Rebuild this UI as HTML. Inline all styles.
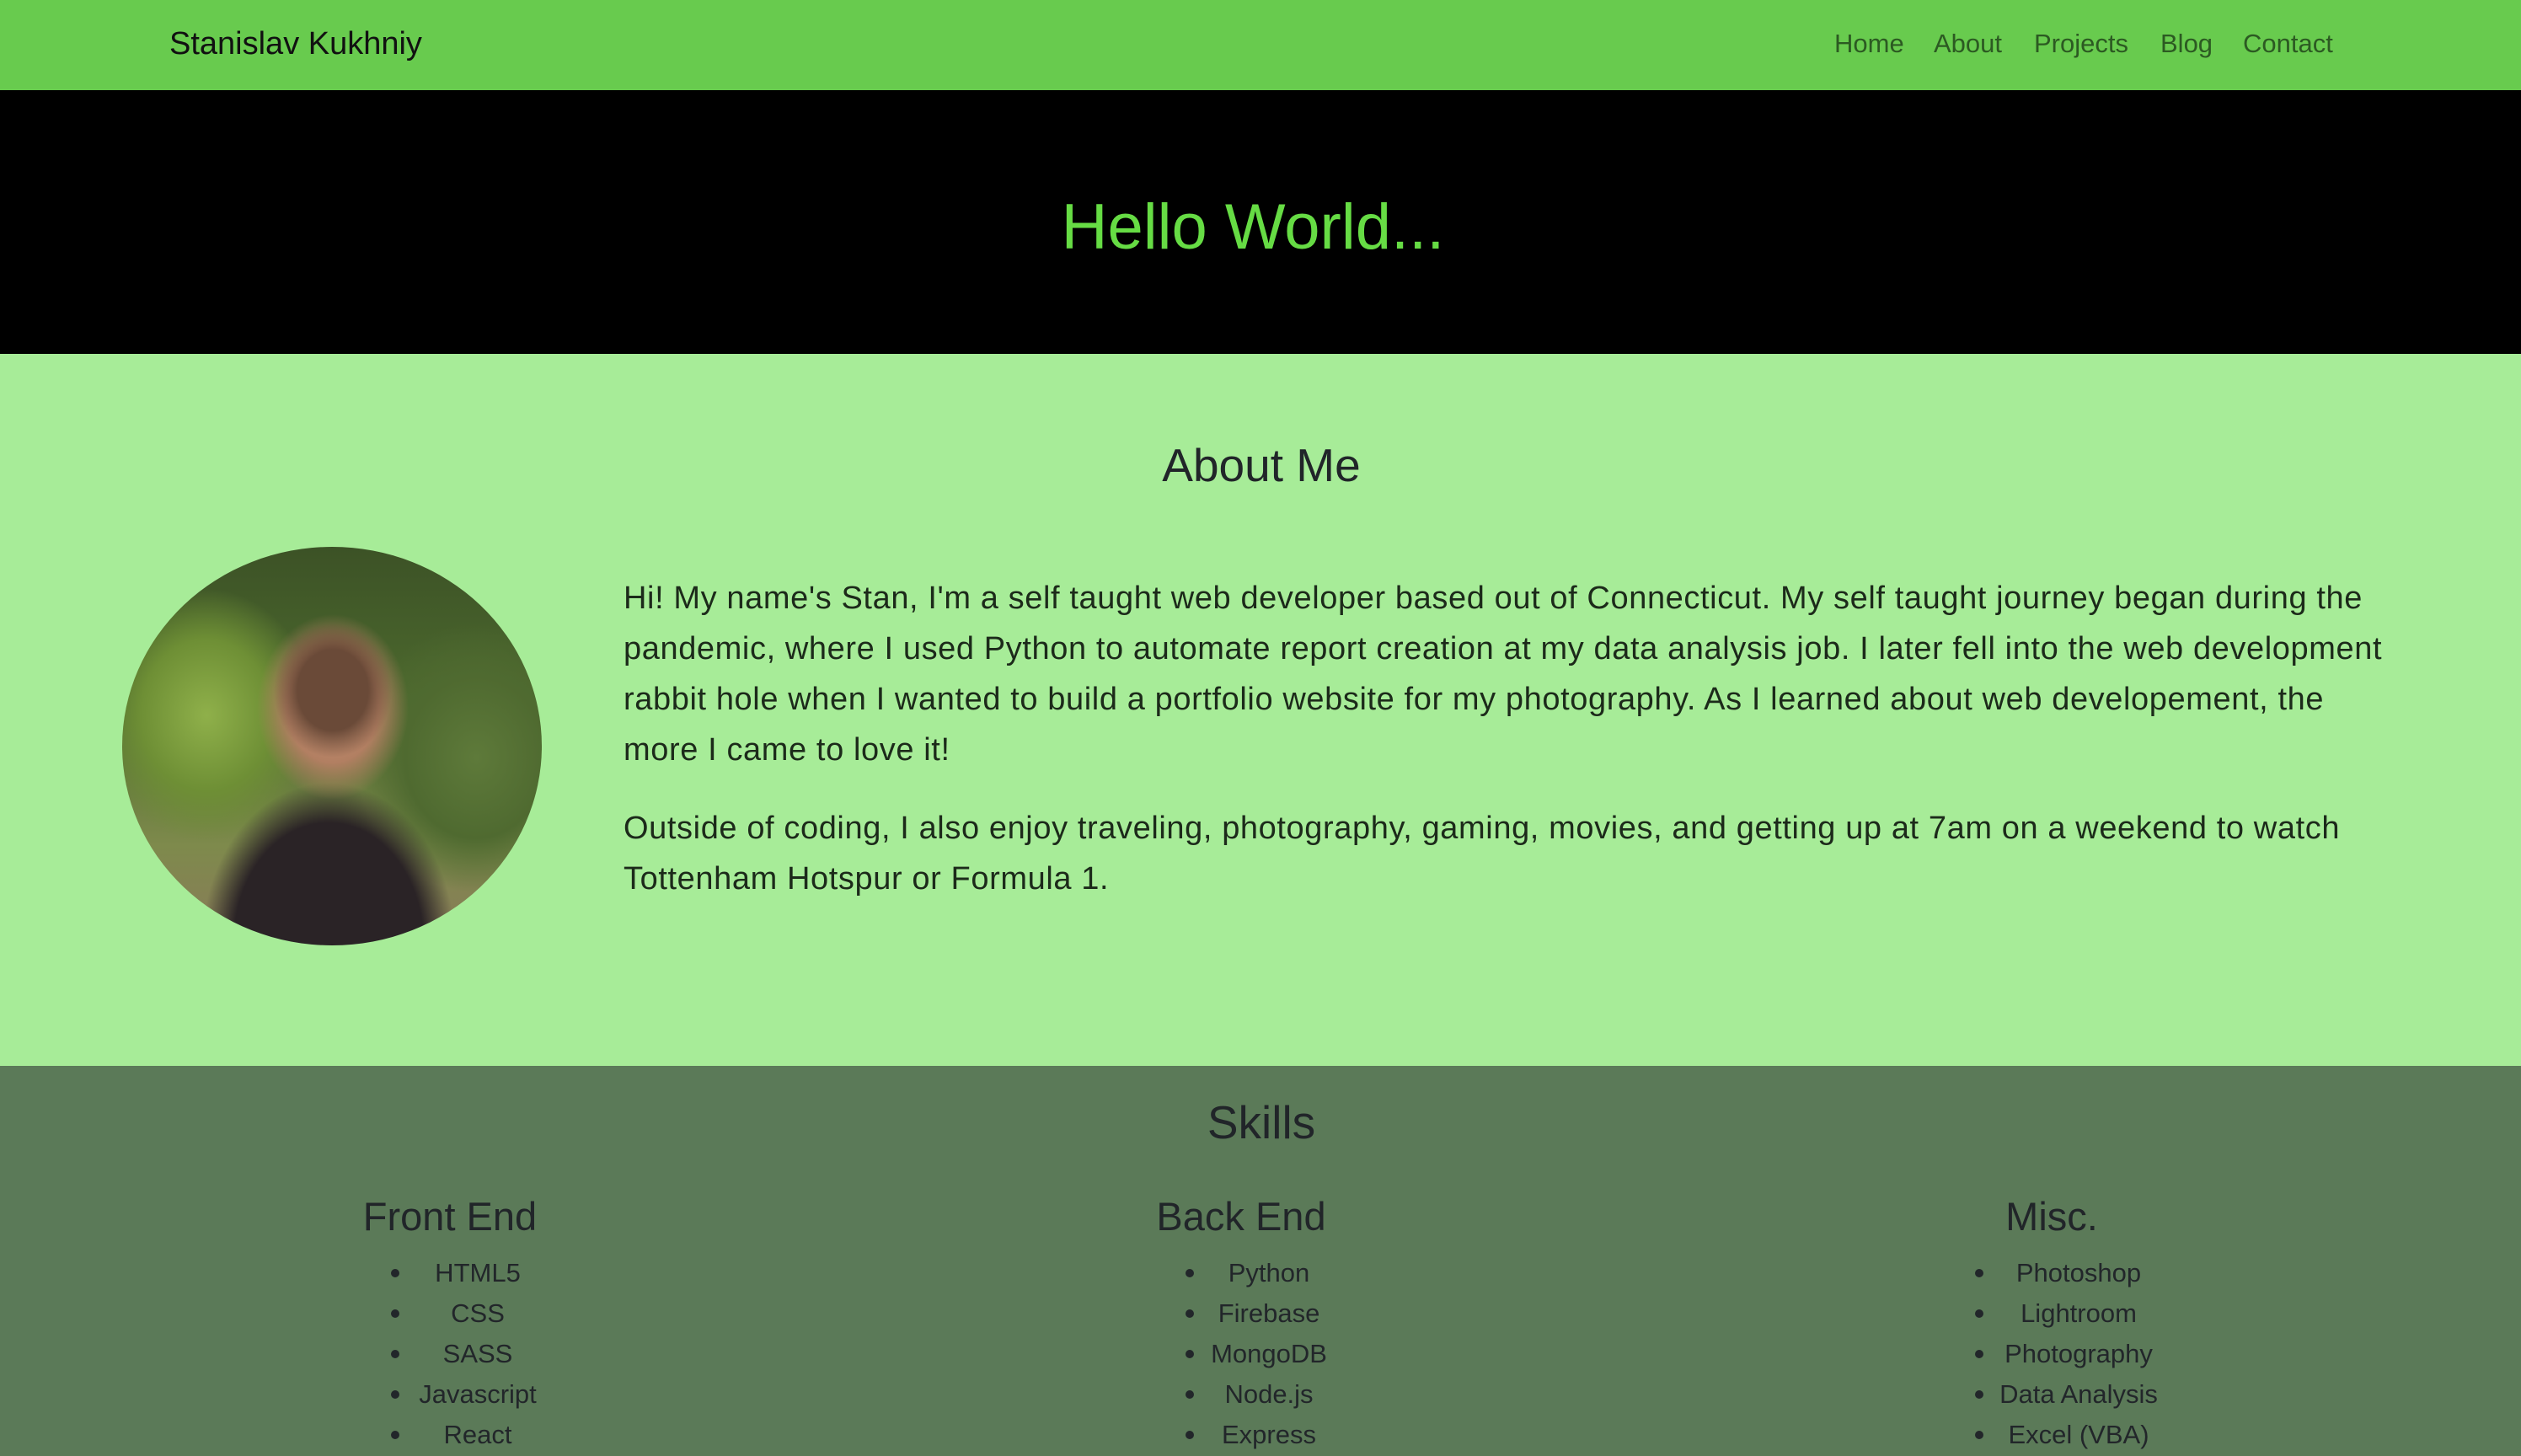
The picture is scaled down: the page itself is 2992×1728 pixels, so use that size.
<!DOCTYPE html>
<html><head><meta charset="utf-8"><style>
*{margin:0;padding:0;box-sizing:border-box}
body{width:2992px;height:1728px;overflow:hidden;font-family:"Liberation Sans",Arial,sans-serif;color:#212529;position:relative;background:#5b7a58}
.a{position:absolute;white-space:nowrap}
#nav{left:0;top:0;width:2992px;height:107px;background:#68cb4e}
#hero{left:0;top:107px;width:2992px;height:313px;background:#000}
#about{left:0;top:420px;width:2992px;height:845px;background:#a7ec98}
#skills{left:0;top:1265px;width:2992px;height:463px;background:#5b7a58}
.c{transform:translateX(-50%)}
.nl{font-size:31px;color:#2c5a22;top:34px}
.p{font-size:38px;letter-spacing:0.6px;left:740px;line-height:60px;color:#1c2a1a}
.li{font-size:31px;color:#22262a}
.b{width:10px;height:10px;border-radius:50%;background:#22262a}
.h3{font-size:47px;font-weight:500;top:1416px}
</style></head><body>
<div class="a" id="nav"></div>
<div class="a" id="hero"></div>
<div class="a" id="about"></div>
<div class="a" id="skills"></div>

<div class="a" style="left:201px;top:31px;font-size:38px;color:#111">Stanislav Kukhniy</div>
<div class="a nl" style="left:2177px">Home</div>
<div class="a nl" style="left:2295px">About</div>
<div class="a nl" style="left:2414px">Projects</div>
<div class="a nl" style="left:2564px">Blog</div>
<div class="a nl" style="left:2662px">Contact</div>

<div class="a c" style="left:1487px;top:226px;font-size:76px;color:#66dc44">Hello World...</div>

<div class="a c" style="left:1497px;top:520px;font-size:55px;font-weight:500">About Me</div>

<div class="a" style="left:145px;top:649px;width:498px;height:473px;border-radius:50%;overflow:hidden;background:
radial-gradient(ellipse 70px 80px at 250px 170px,#6a4a38 0,#6a4a38 60%,transparent 100%),
radial-gradient(ellipse 90px 110px at 250px 190px,#c89678 0,#b27f62 60%,transparent 100%),
radial-gradient(ellipse 150px 190px at 245px 470px,#2a2326 0,#2a2326 75%,transparent 100%),
radial-gradient(ellipse 130px 150px at 100px 200px,#8fb04a 0,#6e8f35 60%,transparent 100%),
radial-gradient(ellipse 140px 160px at 420px 250px,#5e7a3a 0,#4f6a30 60%,transparent 100%),
linear-gradient(180deg,#3c5226 0%,#4d6a2e 40%,#7e8a4c 75%,#8a7a5a 100%)"></div>

<div class="a p" style="top:680px">Hi! My name's Stan, I'm a self taught web developer based out of Connecticut. My self taught journey began during the</div>
<div class="a p" style="top:740px">pandemic, where I used Python to automate report creation at my data analysis job. I later fell into the web development</div>
<div class="a p" style="top:800px">rabbit hole when I wanted to build a portfolio website for my photography. As I learned about web developement, the</div>
<div class="a p" style="top:860px">more I came to love it!</div>
<div class="a p" style="top:953px">Outside of coding, I also enjoy traveling, photography, gaming, movies, and getting up at 7am on a weekend to watch</div>
<div class="a p" style="top:1013px">Tottenham Hotspur or Formula 1.</div>

<div class="a c" style="left:1497px;top:1300px;font-size:55px;font-weight:500">Skills</div>
<div class="a c h3" style="left:534px">Front End</div>
<div class="a c h3" style="left:1473px">Back End</div>
<div class="a c h3" style="left:2435px">Misc.</div>

<div class="a c li" style="left:567px;top:1493px">HTML5</div>
<div class="a c li" style="left:567px;top:1541px">CSS</div>
<div class="a c li" style="left:567px;top:1589px">SASS</div>
<div class="a c li" style="left:567px;top:1637px">Javascript</div>
<div class="a c li" style="left:567px;top:1685px">React</div>

<div class="a c li" style="left:1506px;top:1493px">Python</div>
<div class="a c li" style="left:1506px;top:1541px">Firebase</div>
<div class="a c li" style="left:1506px;top:1589px">MongoDB</div>
<div class="a c li" style="left:1506px;top:1637px">Node.js</div>
<div class="a c li" style="left:1506px;top:1685px">Express</div>

<div class="a c li" style="left:2467px;top:1493px">Photoshop</div>
<div class="a c li" style="left:2467px;top:1541px">Lightroom</div>
<div class="a c li" style="left:2467px;top:1589px">Photography</div>
<div class="a c li" style="left:2467px;top:1637px">Data Analysis</div>
<div class="a c li" style="left:2467px;top:1685px">Excel (VBA)</div>

<div class="a b" style="left:464px;top:1506px"></div>
<div class="a b" style="left:464px;top:1554px"></div>
<div class="a b" style="left:464px;top:1602px"></div>
<div class="a b" style="left:464px;top:1650px"></div>
<div class="a b" style="left:464px;top:1698px"></div>
<div class="a b" style="left:1407px;top:1506px"></div>
<div class="a b" style="left:1407px;top:1554px"></div>
<div class="a b" style="left:1407px;top:1602px"></div>
<div class="a b" style="left:1407px;top:1650px"></div>
<div class="a b" style="left:1407px;top:1698px"></div>
<div class="a b" style="left:2344px;top:1506px"></div>
<div class="a b" style="left:2344px;top:1554px"></div>
<div class="a b" style="left:2344px;top:1602px"></div>
<div class="a b" style="left:2344px;top:1650px"></div>
<div class="a b" style="left:2344px;top:1698px"></div>
</body></html>
